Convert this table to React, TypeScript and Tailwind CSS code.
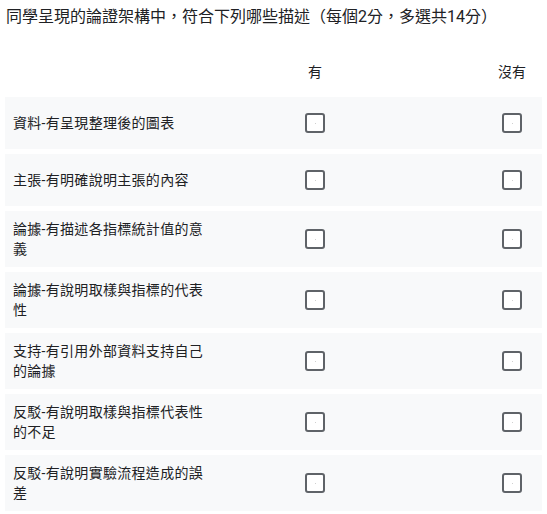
const rows = [
  '資料-有呈現整理後的圖表',
  '主張-有明確說明主張的內容',
  '論據-有描述各指標統計值的意義',
  '論據-有說明取樣與指標的代表性',
  '支持-有引用外部資料支持自己的論據',
  '反駁-有說明取樣與指標代表性的不足',
  '反駁-有說明實驗流程造成的誤差',
];

function Checkbox() {
  return (
    <div className="flex h-5 w-5 items-center justify-center rounded-[3px] border-2 border-[#5f6368] bg-white">
      <div className="h-px w-px bg-[#d0d0d0]" />
    </div>
  );
}

export default function App() {
  return (
    <div
      className="min-h-[514px] w-[547px] bg-white px-[5px] text-[#202124]"
      style={{ fontFamily: 'Roboto, "Noto Sans CJK TC", sans-serif' }}
    >
      <h1 className="pt-[5px] pl-px text-[16px] leading-6 font-normal">
        同學呈現的論證架構中，符合下列哪些描述（每個2分，多選共14分）
      </h1>

      <div className="mt-[33px] grid grid-cols-[211px_198px_196px] overflow-hidden text-[14px] leading-5">
        <div />
        <div className="text-center">有</div>
        <div className="text-center">沒有</div>
      </div>

      <div className="mt-[15px] flex flex-col gap-[5px]">
        {rows.map((label) => (
          <div key={label} className="overflow-hidden bg-[#f8f9fa]">
            <div className="grid min-h-[52px] grid-cols-[211px_198px_196px] items-center">
              <div className="py-2 pr-[5px] pl-2 text-[14px] leading-5 tracking-[0.3px]">{label}</div>
              <div className="flex justify-center">
                <Checkbox />
              </div>
              <div className="flex justify-center">
                <Checkbox />
              </div>
            </div>
          </div>
        ))}
      </div>
    </div>
  );
}
